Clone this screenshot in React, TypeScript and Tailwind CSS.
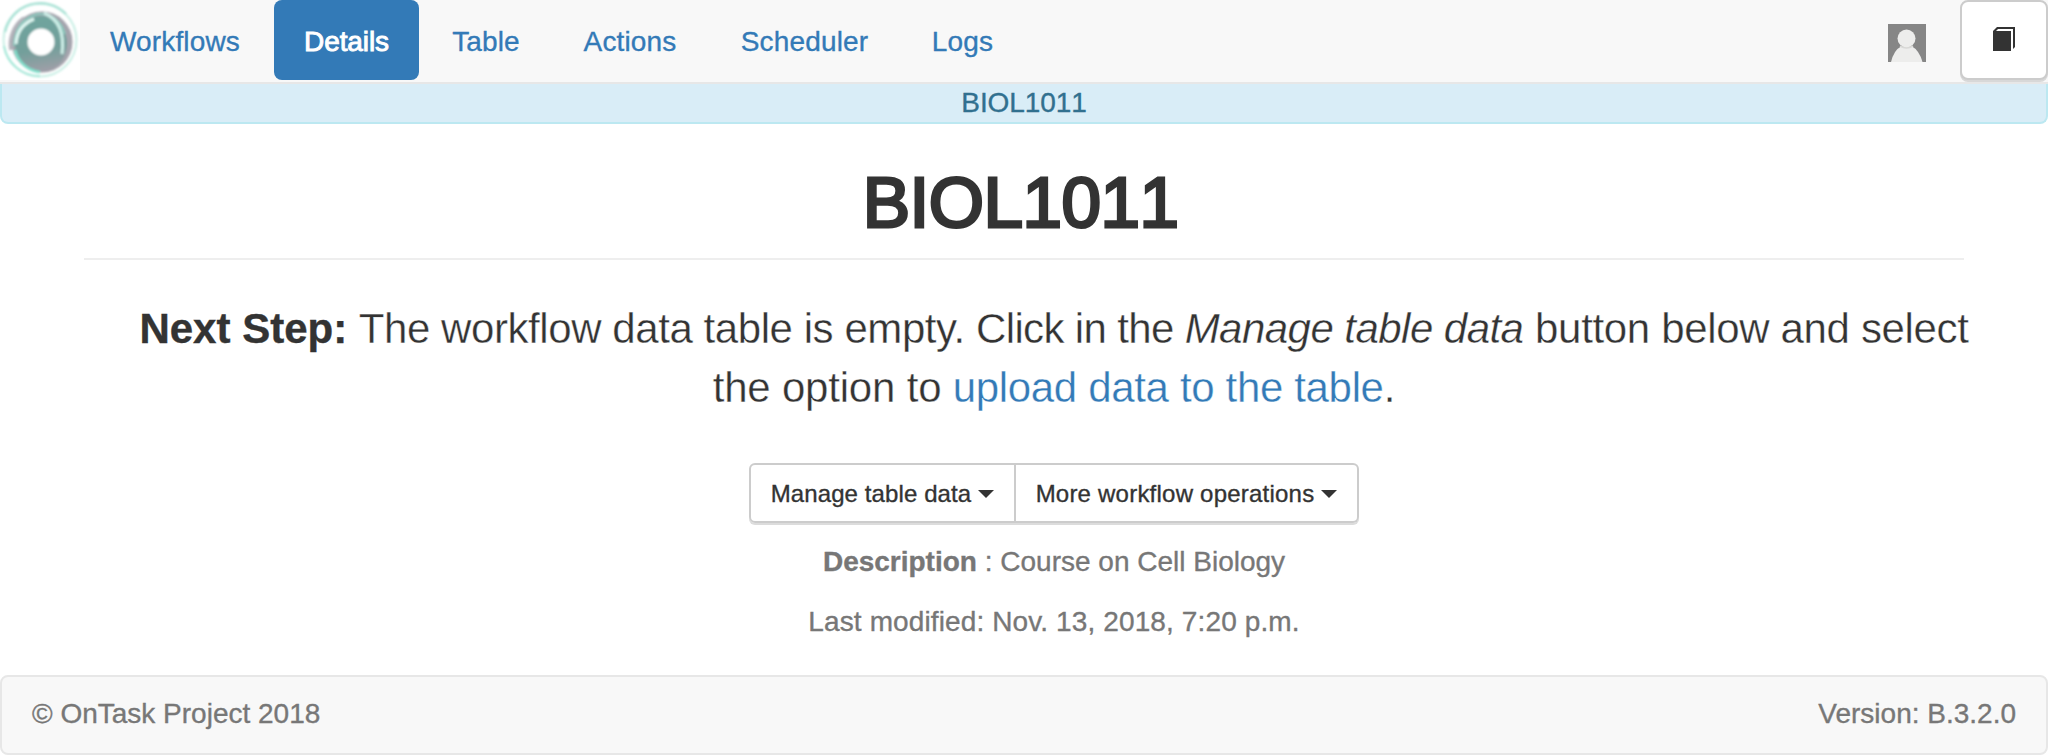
import { ReactNode } from "react";

function Logo() {
  return (
    <svg viewBox="0 0 80 80" className="size-20 shrink-0 bg-white">
      <defs>
        <linearGradient id="body" x1="0.4" y1="0" x2="0.55" y2="1">
          <stop offset="0" stopColor="#6fa59e" />
          <stop offset="0.6" stopColor="#739f9b" />
          <stop offset="1" stopColor="#a09fa8" />
        </linearGradient>
        <filter id="soft" x="-20%" y="-20%" width="140%" height="140%">
          <feGaussianBlur stdDeviation="0.9" />
        </filter>
      </defs>
      <g filter="url(#soft)" fill="none">
        <circle cx="40" cy="40" r="36.500" stroke="#c9efe5" strokeWidth="2" />
        <path d="M5 32A36 36 0 0 1 66 14" stroke="#a9e2d5" strokeWidth="2.500" />
        <path d="M4 46A36 36 0 0 0 40 76" stroke="#9fe6d6" strokeWidth="1.800" />
        <circle cx="42" cy="42" r="30.500" fill="#a4a4ad" />
        <ellipse cx="41" cy="44" rx="26" ry="28" fill="url(#body)" />
        <path d="M11 50A32 32 0 0 1 24 18" stroke="#b2b2ba" strokeWidth="3.500" />
        <path d="M14 46Q15 20 38 14Q58 13 65 34" stroke="#88c9bd" strokeWidth="2" />
        <path d="M15 50A29 29 0 0 0 40 72" stroke="#7ee0cb" strokeWidth="2.500" />
        <path d="M16 44Q17 26 34 19" stroke="#e0f7f2" strokeWidth="3" />
        <path d="M44 13Q66 22 62 54" stroke="#cdeee7" strokeWidth="3" />
        <circle cx="41" cy="42" r="13.500" fill="#fff" />
      </g>
    </svg>
  );
}

function Avatar() {
  return (
    <svg viewBox="0 0 38 38" className="mt-6 size-[38px] shrink-0 bg-[#868686]">
      <path d="M3 38Q6 26 13 22.500H24Q31 26 34.500 38Z" fill="#ededec" />
      <circle cx="18.500" cy="14.500" r="9" fill="#ededec" />
      <path d="M12 22Q18.500 26 25 22" fill="none" stroke="#d8d8d6" strokeWidth="1.500" />
    </svg>
  );
}

function BookIcon() {
  return (
    <svg viewBox="0 0 22 24" className="-mt-0.5 h-6 w-[22px]" fill="#333">
      <path d="M0 24V4L4 0H22V20L20 22V2H5L3 4H18V24Z" />
    </svg>
  );
}

function Caret() {
  return (
    <svg viewBox="0 0 16 8" className="mt-0.5 ml-[7px] h-2 w-4" fill="#333">
      <path d="M0 0H16L8 8Z" />
    </svg>
  );
}

function NavLink({ active, width, children }: { active?: boolean; width: string; children: ReactNode }) {
  return (
    <a
      className={
        active
          ? `${width} flex h-20 items-center justify-center rounded-lg bg-[#337ab7] pt-1 tracking-[-0.1px] text-white [-webkit-text-stroke:0.9px_white]`
          : `${width} flex h-20 items-center justify-center pt-1 text-[#337ab7]`
      }
    >
      {children}
    </a>
  );
}

export default function App() {
  return (
    <div className="h-[755px] w-[2048px] overflow-hidden bg-white font-['Liberation_Sans',Arial,sans-serif] text-[28px] leading-10 text-[#333] [-webkit-text-stroke:0.35px_currentColor]">
      <nav className="flex h-21 items-start border-b-2 border-[#e7e7e7] bg-[#f8f8f8] tracking-[0.15px]">
        <Logo />
        <div className="flex gap-1">
          <NavLink width="w-[190px]">Workflows</NavLink>
          <NavLink width="w-[145px]" active>
            Details
          </NavLink>
          <NavLink width="w-[126px]">Table</NavLink>
          <NavLink width="w-[154px]">Actions</NavLink>
          <NavLink width="w-[187px]">Scheduler</NavLink>
          <NavLink width="w-[121px]">Logs</NavLink>
        </div>
        <div className="ml-auto flex gap-[34px]">
          <Avatar />
          <button className="flex h-20 w-22 items-center justify-center rounded-lg border-2 border-[#ccc] bg-white shadow-[0_2px_0_#d8d8d8]">
            <BookIcon />
          </button>
        </div>
      </nav>

      <div className="flex h-10 justify-center rounded-b-lg border-2 border-t-0 border-[#bce8f1] bg-[#d9edf7] text-[#31708f]">
        <span className="-mt-px tracking-[-0.1px] [font-kerning:none]">BIOL1011</span>
      </div>

      <main className="mx-[84px]">
        <header className="flex h-[136px] items-start justify-center border-b-2 border-[#eee] pt-[39px] pr-[7px]">
          <h1 className="text-[71px] leading-[80px] font-normal tracking-[-0.5px] [-webkit-text-stroke:3px_#333] [font-kerning:none]">
            BIOL1011
          </h1>
        </header>
        <div className="flex flex-col items-center pl-[60px] text-center">
          <p className="mt-[39px] text-[42px] leading-[59px] whitespace-nowrap [-webkit-text-stroke:0.35px_white]">
            <b className="[-webkit-text-stroke:0.4px_#333]">Next Step:</b>{" "}
            <span className="tracking-[-0.43px]">The workflow data table is empty. </span>
            <span className="tracking-[-0.65px]">Click in the </span>
            <em className="tracking-[-0.54px]">Manage table data</em>{" "}
            <span className="tracking-[-0.34px]">button below and select</span>
            <br />
            <span className="tracking-[-0.2px]">the option to </span>
            <a className="tracking-[-0.34px] text-[#337ab7]">upload data to the table</a>.
          </p>
          <div className="mt-[46px] flex h-[60px] rounded-md text-2xl shadow-[0_2px_0_#dcdcdc]">
            <button className="flex w-[267px] items-center justify-center rounded-l-md border-2 border-[#ccc] tracking-[0.1px]">
              <span className="pt-0.5">Manage table data</span>
              <Caret />
            </button>
            <button className="flex w-[343px] items-center justify-center rounded-r-md border-2 border-l-0 border-[#ccc] tracking-[0.22px]">
              <span className="pt-0.5">More workflow operations</span>
              <Caret />
            </button>
          </div>
          <p className="mt-[19px] text-[#777]">
            <b>Description</b> : Course on Cell Biology
          </p>
          <p className="mt-5 tracking-[0.12px] text-[#777]">Last modified: Nov. 13, 2018, 7:20 p.m.</p>
        </div>
      </main>

      <footer className="mt-[33px] flex h-20 justify-between rounded-lg border-2 border-[#e7e7e7] bg-[#f8f8f8] px-[30px] pt-[17px] text-[#777]">
        <span>© OnTask Project 2018</span>
        <span>Version: B.3.2.0</span>
      </footer>
    </div>
  );
}
